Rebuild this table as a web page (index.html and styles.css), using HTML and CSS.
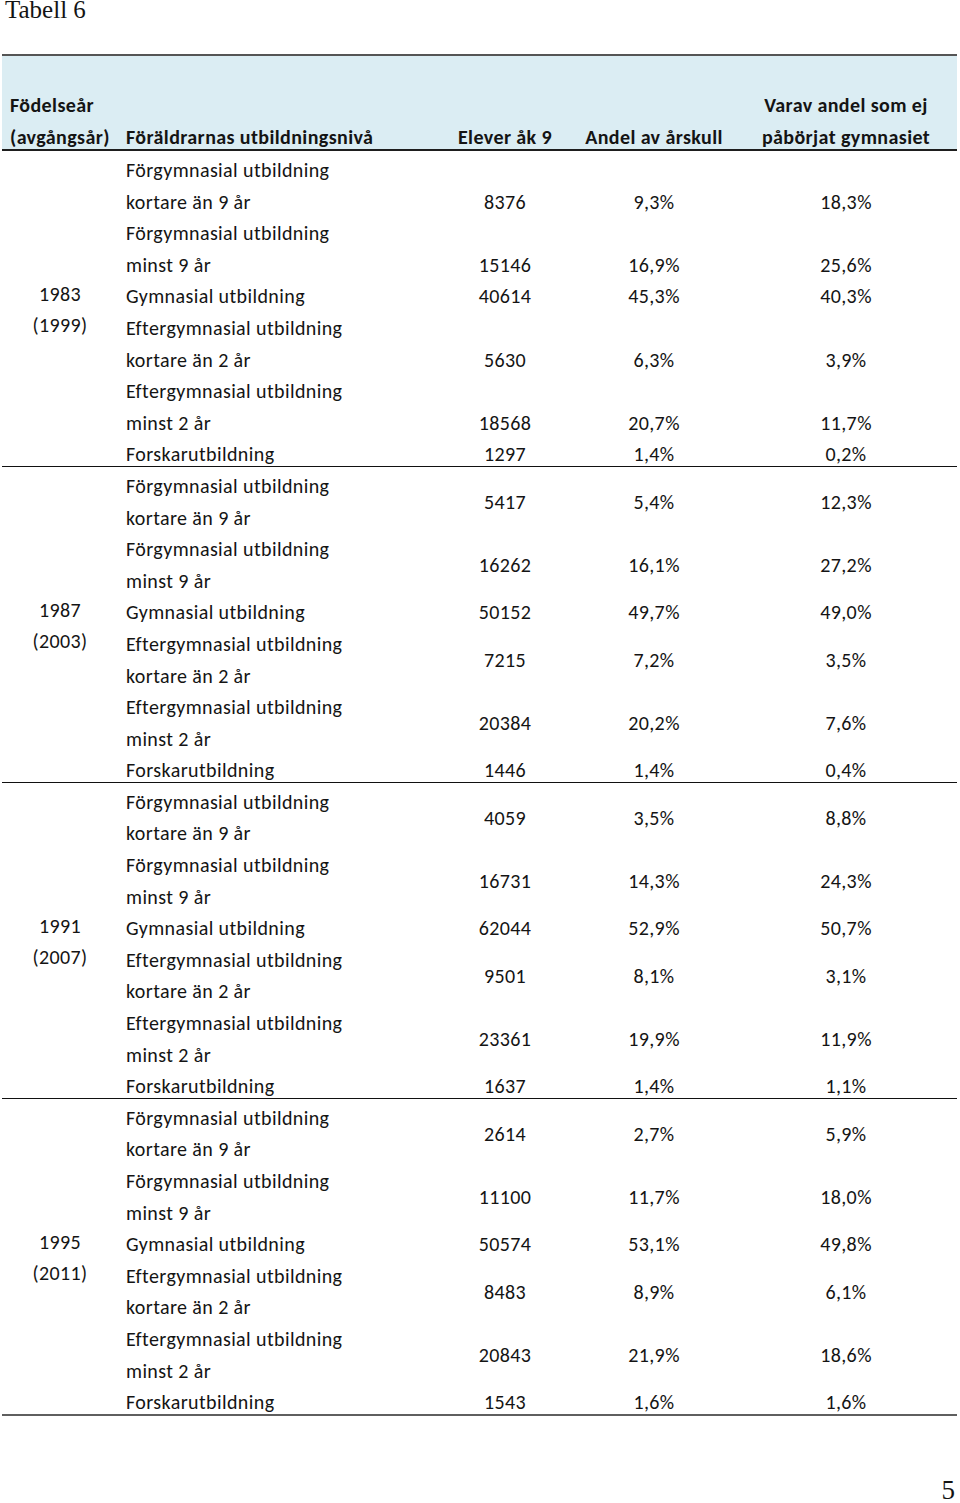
FILE: index.html
```html
<!DOCTYPE html>
<html lang="sv">
<head>
<meta charset="utf-8">
<title>Tabell 6</title>
<link rel="stylesheet" href="styles.css">
</head>
<body>
<div class="page">
  <div class="title">Tabell 6</div>
  <table class="data">
    <thead>
      <tr>
        <th class="c-year"><span class="h1">Födelseår</span><span class="h2">(avgångsår)</span></th>
        <th class="c-label"><span class="h2">Föräldrarnas utbildningsnivå</span></th>
        <th class="c-n"><span class="h2">Elever åk 9</span></th>
        <th class="c-p"><span class="h2">Andel av årskull</span></th>
        <th class="c-q"><span class="h1">Varav andel som ej</span><span class="h2">påbörjat gymnasiet</span></th>
      </tr>
    </thead>
    <tbody class="g g-bottom">
      <tr class="first"><td class="c-year" rowspan="6">1983<br>(1999)</td><td class="c-label">Förgymnasial utbildning<br>kortare än 9 år</td><td class="c-n">8376</td><td class="c-p">9,3%</td><td class="c-q">18,3%</td></tr>
      <tr><td class="c-label">Förgymnasial utbildning<br>minst 9 år</td><td class="c-n">15146</td><td class="c-p">16,9%</td><td class="c-q">25,6%</td></tr>
      <tr><td class="c-label">Gymnasial utbildning</td><td class="c-n">40614</td><td class="c-p">45,3%</td><td class="c-q">40,3%</td></tr>
      <tr><td class="c-label">Eftergymnasial utbildning<br>kortare än 2 år</td><td class="c-n">5630</td><td class="c-p">6,3%</td><td class="c-q">3,9%</td></tr>
      <tr><td class="c-label">Eftergymnasial utbildning<br>minst 2 år</td><td class="c-n">18568</td><td class="c-p">20,7%</td><td class="c-q">11,7%</td></tr>
      <tr class="last"><td class="c-label">Forskarutbildning</td><td class="c-n">1297</td><td class="c-p">1,4%</td><td class="c-q">0,2%</td></tr>
    </tbody>
    <tbody class="g">
      <tr class="first"><td class="c-year" rowspan="6">1987<br>(2003)</td><td class="c-label">Förgymnasial utbildning<br>kortare än 9 år</td><td class="c-n">5417</td><td class="c-p">5,4%</td><td class="c-q">12,3%</td></tr>
      <tr><td class="c-label">Förgymnasial utbildning<br>minst 9 år</td><td class="c-n">16262</td><td class="c-p">16,1%</td><td class="c-q">27,2%</td></tr>
      <tr><td class="c-label">Gymnasial utbildning</td><td class="c-n">50152</td><td class="c-p">49,7%</td><td class="c-q">49,0%</td></tr>
      <tr><td class="c-label">Eftergymnasial utbildning<br>kortare än 2 år</td><td class="c-n">7215</td><td class="c-p">7,2%</td><td class="c-q">3,5%</td></tr>
      <tr><td class="c-label">Eftergymnasial utbildning<br>minst 2 år</td><td class="c-n">20384</td><td class="c-p">20,2%</td><td class="c-q">7,6%</td></tr>
      <tr class="last"><td class="c-label">Forskarutbildning</td><td class="c-n">1446</td><td class="c-p">1,4%</td><td class="c-q">0,4%</td></tr>
    </tbody>
    <tbody class="g">
      <tr class="first"><td class="c-year" rowspan="6">1991<br>(2007)</td><td class="c-label">Förgymnasial utbildning<br>kortare än 9 år</td><td class="c-n">4059</td><td class="c-p">3,5%</td><td class="c-q">8,8%</td></tr>
      <tr><td class="c-label">Förgymnasial utbildning<br>minst 9 år</td><td class="c-n">16731</td><td class="c-p">14,3%</td><td class="c-q">24,3%</td></tr>
      <tr><td class="c-label">Gymnasial utbildning</td><td class="c-n">62044</td><td class="c-p">52,9%</td><td class="c-q">50,7%</td></tr>
      <tr><td class="c-label">Eftergymnasial utbildning<br>kortare än 2 år</td><td class="c-n">9501</td><td class="c-p">8,1%</td><td class="c-q">3,1%</td></tr>
      <tr><td class="c-label">Eftergymnasial utbildning<br>minst 2 år</td><td class="c-n">23361</td><td class="c-p">19,9%</td><td class="c-q">11,9%</td></tr>
      <tr class="last"><td class="c-label">Forskarutbildning</td><td class="c-n">1637</td><td class="c-p">1,4%</td><td class="c-q">1,1%</td></tr>
    </tbody>
    <tbody class="g g-end">
      <tr class="first"><td class="c-year" rowspan="6">1995<br>(2011)</td><td class="c-label">Förgymnasial utbildning<br>kortare än 9 år</td><td class="c-n">2614</td><td class="c-p">2,7%</td><td class="c-q">5,9%</td></tr>
      <tr><td class="c-label">Förgymnasial utbildning<br>minst 9 år</td><td class="c-n">11100</td><td class="c-p">11,7%</td><td class="c-q">18,0%</td></tr>
      <tr><td class="c-label">Gymnasial utbildning</td><td class="c-n">50574</td><td class="c-p">53,1%</td><td class="c-q">49,8%</td></tr>
      <tr><td class="c-label">Eftergymnasial utbildning<br>kortare än 2 år</td><td class="c-n">8483</td><td class="c-p">8,9%</td><td class="c-q">6,1%</td></tr>
      <tr><td class="c-label">Eftergymnasial utbildning<br>minst 2 år</td><td class="c-n">20843</td><td class="c-p">21,9%</td><td class="c-q">18,6%</td></tr>
      <tr class="last"><td class="c-label">Forskarutbildning</td><td class="c-n">1543</td><td class="c-p">1,6%</td><td class="c-q">1,6%</td></tr>
    </tbody>
  </table>
  <div class="pagenum">5</div>
</div>
</body>
</html>
```

FILE: styles.css
```css
html, body {
  margin: 0;
  padding: 0;
  background: #ffffff;
}

.page {
  width: 960px;
  height: 1503px;
  position: relative;
  color: #141414;
}

.title {
  font-family: "Liberation Serif", "Times New Roman", serif;
  font-size: 25px;
  line-height: 19px;
  padding-left: 5px;
  height: 54px;
}

.data {
  margin-left: 2px;
  width: 955px;
  border-collapse: collapse;
  table-layout: fixed;
  font-family: Carlito, Calibri, Lato, "Liberation Sans", sans-serif;
  font-size: 20px;
  letter-spacing: 0.4px;
  line-height: 31.6px;
}

.data th, .data td {
  box-sizing: border-box;
  padding: 0;
  white-space: nowrap;
}

.data thead tr {
  background: #dbedf3;
  border-top: 2px solid #555555;
  border-bottom: 2px solid #1e1e1e;
}

.data th {
  font-weight: 700;
  vertical-align: bottom;
  height: 95px;
  line-height: 21.6px;
}

.h1, .h2 {
  display: block;
}

.h1 {
  padding-bottom: 10.4px;
}

.c-year { width: 116px; text-align: center; }
.c-label { width: 313px; text-align: left; padding-left: 8px !important; }
.c-n { width: 148px; text-align: center; }
.c-p { width: 150px; text-align: center; }
.c-q { width: 228px; text-align: center; padding-left: 6px !important; }

.data th.c-year {
  text-align: left;
  padding-left: 8px;
}

.data td { vertical-align: middle; }
.g-bottom td { vertical-align: bottom; }
.g-bottom td.c-year { vertical-align: middle; }

/* shift text 4px lower inside each group, keeping the group 316px tall */
.g tr.first td { padding-top: 4px; }
.g tr.last td { padding-top: 4px; line-height: 22.6px; }

.g { border-bottom: 1px solid #111111; }
.g-end { border-bottom: 2px solid #5f5f5f; }

.pagenum {
  position: absolute;
  right: 5px;
  top: 1477px;
  font-family: "Liberation Serif", "Times New Roman", serif;
  font-size: 27px;
  line-height: 27px;
}
```
